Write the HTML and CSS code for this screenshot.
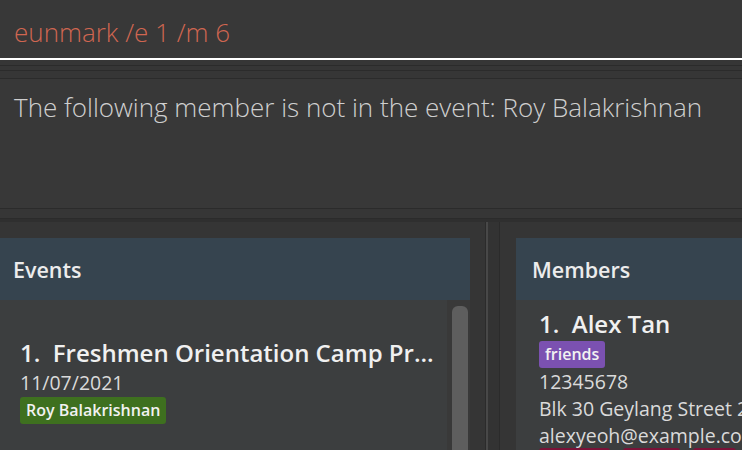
FILE: index.html
```html
<!DOCTYPE html>
<html>
<head>
<meta charset="utf-8">
<link rel="stylesheet" href="styles.css">
</head>
<body>
<div class="app">
  <div class="command-pane">
    <div class="command-text">eunmark /e 1 /m 6</div>
  </div>
  <div class="result-pane">
    <div class="result-frame">
      <div class="result-box">
        <div class="result-text">The following member is not in the event: Roy Balakrishnan</div>
      </div>
    </div>
  </div>
  <div class="panels">
    <section class="panel events">
      <div class="panel-header">Events</div>
      <div class="panel-body">
        <div class="list">
          <div class="card event-card">
            <div class="card-title">1.&nbsp; Freshmen Orientation Camp Pr...</div>
            <div class="card-line date">11/07/2021</div>
            <div class="tags"><span class="tag green">Roy Balakrishnan</span></div>
          </div>
        </div>
        <div class="scroll-track"><div class="thumb"></div></div>
      </div>
    </section>
    <div class="divider"></div>
    <section class="panel members">
      <div class="panel-header">Members</div>
      <div class="panel-body">
        <div class="list">
          <div class="card member-card">
            <div class="card-title">1.&nbsp; Alex Tan</div>
            <div class="tags"><span class="tag purple">friends</span></div>
            <div class="card-line">12345678</div>
            <div class="card-line">Blk 30 Geylang Street 29, #06-40</div>
            <div class="card-line">alexyeoh@example.com</div>
            <div class="tags event-tags"><span class="tag maroon">Orienta</span><span class="tag maroon">Camp</span><span class="tag maroon">Fest</span><span class="tag maroon">Run</span></div>
          </div>
        </div>
      </div>
    </section>
  </div>
</div>
</body>
</html>
```
FILE: styles.css
```css
html, body {
  margin: 0;
  padding: 0;
  background: #383838;
  overflow: hidden;
}
.app {
  width: 742px;
  height: 450px;
  display: flex;
  flex-direction: column;
  font-family: "Open Sans", "Noto Sans", sans-serif;
  overflow: hidden;
}
.command-pane {
  height: 60px;
  box-sizing: border-box;
  background: #383838;
  border-bottom: 2px solid #ffffff;
  padding: 14px 0 0 14px;
  flex-shrink: 0;
}
.command-text {
  color: #d06651;
  font-weight: 300;
  font-size: 26px;
  line-height: 36px;
}
.result-pane {
  background: #363636;
  padding-top: 5px;
  flex-shrink: 0;
}
.result-frame {
  border-top: 1px solid #2b2b2b;
  border-bottom: 1px solid #2b2b2b;
  padding: 4px 0 9px;
}
.result-box {
  border-top: 1px solid #2b2b2b;
  padding-top: 7px;
}
.result-text {
  border-top: 1px solid #2b2b2b;
  border-bottom: 1px solid #2b2b2b;
  height: 131px;
  box-sizing: border-box;
  background: #383838;
  color: #cfcfcf;
  font-weight: 300;
  font-size: 26px;
  line-height: 36px;
  padding: 10px 14px;
  white-space: nowrap;
}
.panels {
  flex: 1;
  display: flex;
  background: #353535;
  border-top: 3px solid #2f2f2f;
  min-height: 0;
}
.panel {
  display: flex;
  flex-direction: column;
  padding-top: 16px;
  min-height: 0;
  min-width: 0;
}
.events {
  flex: 0 0 470px;
  padding-right: 15px;
  border-right: 1px solid #2b2b2b;
}
.divider {
  flex: 0 0 11px;
  border-left: 2px solid #484848;
  border-right: 1px solid #2b2b2b;
  background: #333333;
}
.members {
  flex: 1;
  padding-left: 16px;
  overflow: hidden;
}
.panel-header {
  height: 62px;
  background: #36444f;
  color: #ececec;
  font-weight: 600;
  font-size: 21.5px;
  display: flex;
  align-items: center;
  padding-left: 13px;
  flex-shrink: 0;
}
.members .panel-header {
  padding-left: 16px;
}
.panel-body {
  flex: 1;
  display: flex;
  min-height: 0;
}
.list {
  flex: 1;
  min-width: 0;
  background: #3c3e3f;
  overflow: hidden;
}
.scroll-track {
  flex: 0 0 23px;
  background: #393939;
  padding: 6px 2px 0 5px;
  box-sizing: border-box;
}
.thumb {
  width: 16px;
  height: 200px;
  background: #5e5e5e;
  border-radius: 6px;
}
.card {
  display: flex;
  flex-direction: column;
  align-items: flex-start;
}
.event-card {
  padding: 38px 0 0 20px;
}
.member-card {
  padding: 9px 0 0 23px;
}
.card-title {
  color: #f0f0f0;
  font-weight: 600;
  font-size: 24px;
  line-height: 30px;
  white-space: nowrap;
}
.card-line {
  color: #dadada;
  font-size: 19.5px;
  line-height: 27px;
  white-space: nowrap;
}
.card-line.date {
  line-height: 29px;
}
.tags {
  display: flex;
  gap: 13px;
}
.tag {
  color: #f2f2f2;
  font-weight: 600;
  font-size: 16px;
  line-height: 27px;
  padding: 0 6px;
  border-radius: 3px;
  white-space: nowrap;
}
.member-card .tags {
  margin-top: 2px;
}
.member-card .event-tags {
  margin-top: -1px;
}
.green { background: #3e701f; }
.purple { background: #7b51b1; }
.maroon { background: #7a1238; }
```
